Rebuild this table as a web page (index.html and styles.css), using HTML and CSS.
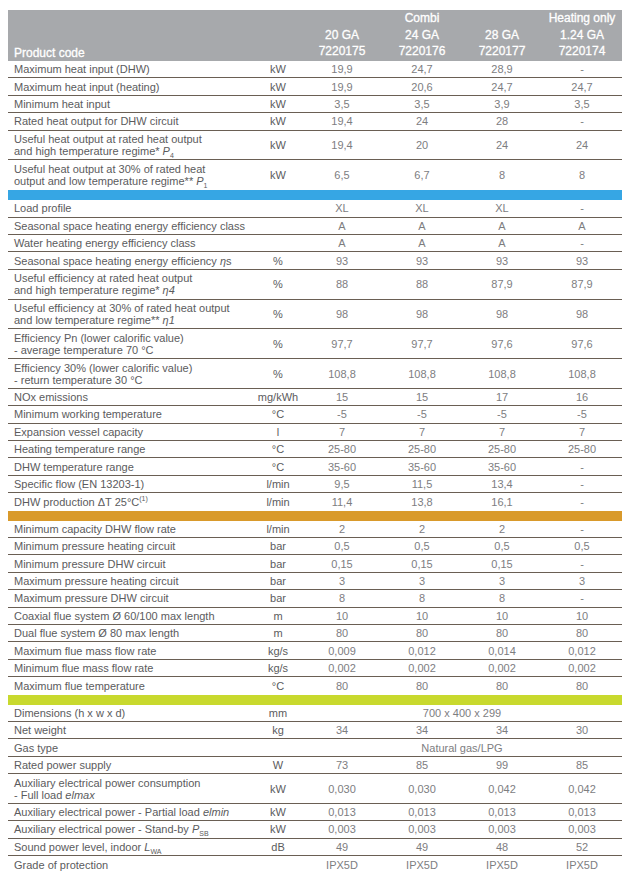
FILE: index.html
```html
<!DOCTYPE html>
<html lang="en">
<head>
<meta charset="utf-8">
<title>Technical data</title>
<link rel="stylesheet" href="styles.css">
</head>
<body>
<div class="sheet">
  <div class="head">
    <div class="lab">Product code</div>
    <div></div>
    <div class="col">20 GA<br>7220175</div>
    <div class="col">Combi<br>24 GA<br>7220176</div>
    <div class="col">28 GA<br>7220177</div>
    <div class="col">Heating only<br>1.24 GA<br>7220174</div>
  </div>

  <div class="row"><div class="lab">Maximum heat input (DHW)</div><div class="unit">kW</div><div class="val">19,9</div><div class="val">24,7</div><div class="val">28,9</div><div class="val">-</div></div>
  <div class="row"><div class="lab">Maximum heat input (heating)</div><div class="unit">kW</div><div class="val">19,9</div><div class="val">20,6</div><div class="val">24,7</div><div class="val">24,7</div></div>
  <div class="row"><div class="lab">Minimum heat input</div><div class="unit">kW</div><div class="val">3,5</div><div class="val">3,5</div><div class="val">3,9</div><div class="val">3,5</div></div>
  <div class="row"><div class="lab">Rated heat output for DHW circuit</div><div class="unit">kW</div><div class="val">19,4</div><div class="val">24</div><div class="val">28</div><div class="val">-</div></div>
  <div class="row two"><div class="lab">Useful heat output at rated heat output<br>and high temperature regime* <i>P</i><sub>4</sub></div><div class="unit">kW</div><div class="val">19,4</div><div class="val">20</div><div class="val">24</div><div class="val">24</div></div>
  <div class="row two end"><div class="lab">Useful heat output at 30% of rated heat<br>output and low temperature regime** <i>P</i><sub>1</sub></div><div class="unit">kW</div><div class="val">6,5</div><div class="val">6,7</div><div class="val">8</div><div class="val">8</div></div>
  <div class="bar blue"></div>

  <div class="row"><div class="lab">Load profile</div><div class="unit"></div><div class="val">XL</div><div class="val">XL</div><div class="val">XL</div><div class="val">-</div></div>
  <div class="row"><div class="lab">Seasonal space heating energy efficiency class</div><div class="unit"></div><div class="val">A</div><div class="val">A</div><div class="val">A</div><div class="val">A</div></div>
  <div class="row"><div class="lab">Water heating energy efficiency class</div><div class="unit"></div><div class="val">A</div><div class="val">A</div><div class="val">A</div><div class="val">-</div></div>
  <div class="row"><div class="lab">Seasonal space heating energy efficiency <i>η</i>s</div><div class="unit">%</div><div class="val">93</div><div class="val">93</div><div class="val">93</div><div class="val">93</div></div>
  <div class="row two"><div class="lab">Useful efficiency at rated heat output<br>and high temperature regime* <i>η4</i></div><div class="unit">%</div><div class="val">88</div><div class="val">88</div><div class="val">87,9</div><div class="val">87,9</div></div>
  <div class="row two"><div class="lab">Useful efficiency at 30% of rated heat output<br>and low temperature regime** <i>η1</i></div><div class="unit">%</div><div class="val">98</div><div class="val">98</div><div class="val">98</div><div class="val">98</div></div>
  <div class="row two"><div class="lab">Efficiency Pn (lower calorific value)<br>- average temperature 70 °C</div><div class="unit">%</div><div class="val">97,7</div><div class="val">97,7</div><div class="val">97,6</div><div class="val">97,6</div></div>
  <div class="row two"><div class="lab">Efficiency 30% (lower calorific value)<br>- return temperature 30 °C</div><div class="unit">%</div><div class="val">108,8</div><div class="val">108,8</div><div class="val">108,8</div><div class="val">108,8</div></div>
  <div class="row"><div class="lab">NOx emissions</div><div class="unit">mg/kWh</div><div class="val">15</div><div class="val">15</div><div class="val">17</div><div class="val">16</div></div>
  <div class="row"><div class="lab">Minimum working temperature</div><div class="unit">°C</div><div class="val">-5</div><div class="val">-5</div><div class="val">-5</div><div class="val">-5</div></div>
  <div class="row"><div class="lab">Expansion vessel capacity</div><div class="unit">l</div><div class="val">7</div><div class="val">7</div><div class="val">7</div><div class="val">7</div></div>
  <div class="row"><div class="lab">Heating temperature range</div><div class="unit">°C</div><div class="val">25-80</div><div class="val">25-80</div><div class="val">25-80</div><div class="val">25-80</div></div>
  <div class="row"><div class="lab">DHW temperature range</div><div class="unit">°C</div><div class="val">35-60</div><div class="val">35-60</div><div class="val">35-60</div><div class="val">-</div></div>
  <div class="row"><div class="lab">Specific flow (EN 13203-1)</div><div class="unit">l/min</div><div class="val">9,5</div><div class="val">11,5</div><div class="val">13,4</div><div class="val">-</div></div>
  <div class="row end"><div class="lab">DHW production ΔT 25°C<sup>(1)</sup></div><div class="unit">l/min</div><div class="val">11,4</div><div class="val">13,8</div><div class="val">16,1</div><div class="val">-</div></div>
  <div class="bar orange"></div>

  <div class="row"><div class="lab">Minimum capacity DHW flow rate</div><div class="unit">l/min</div><div class="val">2</div><div class="val">2</div><div class="val">2</div><div class="val">-</div></div>
  <div class="row"><div class="lab">Minimum pressure heating circuit</div><div class="unit">bar</div><div class="val">0,5</div><div class="val">0,5</div><div class="val">0,5</div><div class="val">0,5</div></div>
  <div class="row"><div class="lab">Minimum pressure DHW circuit</div><div class="unit">bar</div><div class="val">0,15</div><div class="val">0,15</div><div class="val">0,15</div><div class="val">-</div></div>
  <div class="row"><div class="lab">Maximum pressure heating circuit</div><div class="unit">bar</div><div class="val">3</div><div class="val">3</div><div class="val">3</div><div class="val">3</div></div>
  <div class="row"><div class="lab">Maximum pressure DHW circuit</div><div class="unit">bar</div><div class="val">8</div><div class="val">8</div><div class="val">8</div><div class="val">-</div></div>
  <div class="row"><div class="lab">Coaxial flue system Ø 60/100 max length</div><div class="unit">m</div><div class="val">10</div><div class="val">10</div><div class="val">10</div><div class="val">10</div></div>
  <div class="row"><div class="lab">Dual flue system Ø 80 max length</div><div class="unit">m</div><div class="val">80</div><div class="val">80</div><div class="val">80</div><div class="val">80</div></div>
  <div class="row"><div class="lab">Maximum flue mass flow rate</div><div class="unit">kg/s</div><div class="val">0,009</div><div class="val">0,012</div><div class="val">0,014</div><div class="val">0,012</div></div>
  <div class="row"><div class="lab">Minimum flue mass flow rate</div><div class="unit">kg/s</div><div class="val">0,002</div><div class="val">0,002</div><div class="val">0,002</div><div class="val">0,002</div></div>
  <div class="row end"><div class="lab">Maximum flue temperature</div><div class="unit">°C</div><div class="val">80</div><div class="val">80</div><div class="val">80</div><div class="val">80</div></div>
  <div class="bar green"></div>

  <div class="row"><div class="lab">Dimensions (h x w x d)</div><div class="unit">mm</div><div class="val span4">700 x 400 x 299</div></div>
  <div class="row"><div class="lab">Net weight</div><div class="unit">kg</div><div class="val">34</div><div class="val">34</div><div class="val">34</div><div class="val">30</div></div>
  <div class="row"><div class="lab">Gas type</div><div class="unit"></div><div class="val span4">Natural gas/LPG</div></div>
  <div class="row"><div class="lab">Rated power supply</div><div class="unit">W</div><div class="val">73</div><div class="val">85</div><div class="val">99</div><div class="val">85</div></div>
  <div class="row two"><div class="lab">Auxiliary electrical power consumption<br>- Full load <i>elmax</i></div><div class="unit">kW</div><div class="val">0,030</div><div class="val">0,030</div><div class="val">0,042</div><div class="val">0,042</div></div>
  <div class="row"><div class="lab">Auxiliary electrical power - Partial load <i>elmin</i></div><div class="unit">kW</div><div class="val">0,013</div><div class="val">0,013</div><div class="val">0,013</div><div class="val">0,013</div></div>
  <div class="row"><div class="lab">Auxiliary electrical power - Stand-by <i>P</i><sub>SB</sub></div><div class="unit">kW</div><div class="val">0,003</div><div class="val">0,003</div><div class="val">0,003</div><div class="val">0,003</div></div>
  <div class="row"><div class="lab">Sound power level, indoor <i>L</i><sub>WA</sub></div><div class="unit">dB</div><div class="val">49</div><div class="val">49</div><div class="val">48</div><div class="val">52</div></div>
  <div class="row end"><div class="lab">Grade of protection</div><div class="unit"></div><div class="val">IPX5D</div><div class="val">IPX5D</div><div class="val">IPX5D</div><div class="val">IPX5D</div></div>
</div>
</body>
</html>
```

FILE: styles.css
```css
html, body {
  margin: 0;
  padding: 0;
  background: #ffffff;
}

body {
  font-family: "Liberation Sans", Arial, sans-serif;
  font-size: 11px;
  color: #5b5b5d;
}

.sheet {
  width: 614px;
  margin: 10px 0 0 8px;
}

.head {
  display: grid;
  grid-template-columns: 246px 48px repeat(4, 80px);
  height: 51px;
  background: #a7a9ac;
  color: #ffffff;
  font-size: 12px;
  font-weight: 400;
  -webkit-text-stroke: 0.3px #ffffff;
  align-items: end;
}

.head .lab {
  padding: 0 0 2px 6px;
  line-height: 16px;
}

.head .col {
  text-align: center;
  line-height: 16.5px;
  padding-bottom: 3px;
}

.row {
  display: grid;
  grid-template-columns: 246px 48px repeat(4, 80px);
  height: 17.4px;
  box-sizing: border-box;
  border-bottom: 1px solid #6a5f54;
  align-items: center;
}

.row.two {
  height: 29.8px;
}

.row.end {
  border-bottom: none;
}

.lab {
  padding-left: 6px;
  line-height: 12px;
  white-space: nowrap;
}

.unit {
  text-align: center;
  line-height: 12px;
}

.val {
  text-align: center;
  color: #7d7d7f;
  line-height: 12px;
}

.span4 {
  grid-column: span 4;
}

.lab sub,
.lab sup {
  font-size: 7px;
  line-height: 0;
}

.bar {
  height: 10px;
}

.bar.blue {
  background: #36a6e4;
}

.bar.orange {
  background: #d99a2b;
}

.bar.green {
  background: #c8d92e;
}
```
